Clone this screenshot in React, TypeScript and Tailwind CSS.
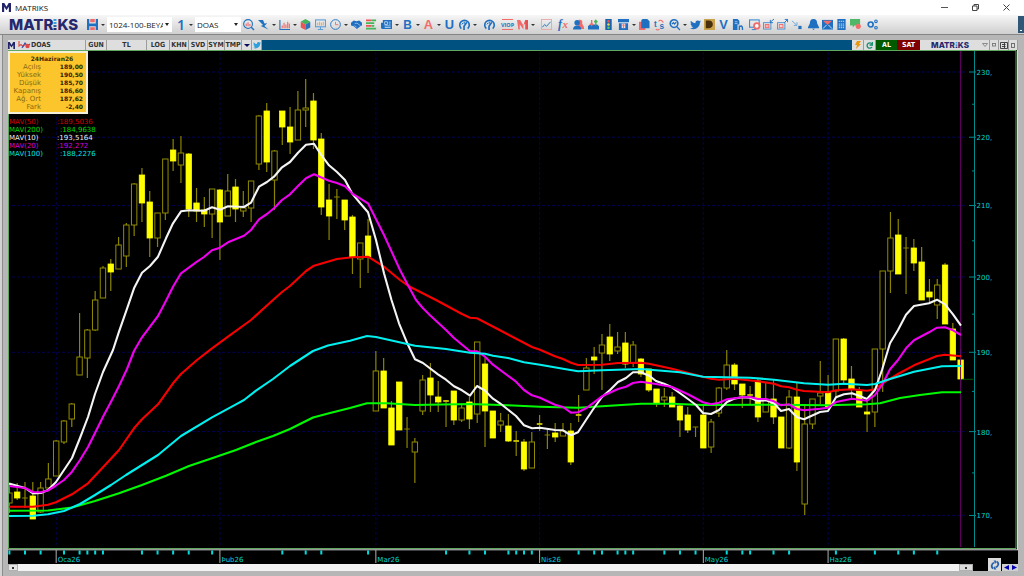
import type { ReactNode } from 'react';

const BLUE = '#1f70c1';
const RED = '#f26b6b';

// x of the first bar and distance between two bars
const X0 = 9.4;
const STEP = 7.797;
const barX = (i: number) => X0 + i * STEP;

// logarithmic price scale
const priceY = (price: number) => 72 + Math.log(230 / price) * 1467;

// [high, top, bottom, low, filled]
type Candle = [number, number, number, number, 0 | 1];

const candles: Candle[] = [
  [483, 493, 503, 513, 0], [483, 492, 498, 500, 1], [482, 498, 498, 508, 0], [482, 496, 519, 519, 1],
  [482, 488, 512, 513, 0], [463, 479, 488, 488, 0], [440, 441, 476, 476, 0], [420, 421, 442, 444, 0],
  [403, 404, 419, 427, 0], [313, 357, 375, 375, 0], [329, 330, 358, 378, 0], [291, 300, 330, 331, 0],
  [266, 268, 298, 298, 0], [259, 264, 272, 291, 1], [237, 245, 269, 269, 0], [223, 225, 256, 267, 0],
  [183, 184, 225, 236, 0], [168, 175, 203, 222, 1], [191, 202, 238, 257, 1], [213, 213, 238, 247, 0],
  [159, 159, 213, 220, 0], [139, 150, 161, 171, 1], [136, 153, 165, 183, 0], [153, 154, 209, 217, 1],
  [188, 203, 211, 222, 1], [197, 210, 214, 227, 1], [189, 189, 214, 238, 0], [189, 190, 222, 260, 1],
  [174, 191, 216, 216, 0], [179, 187, 209, 222, 1], [191, 208, 211, 217, 0], [181, 181, 208, 222, 0],
  [115, 116, 164, 170, 0], [103, 111, 162, 172, 1], [150, 151, 180, 210, 0], [111, 111, 127, 145, 1],
  [107, 127, 142, 154, 1], [91, 110, 140, 140, 0], [79, 108, 110, 127, 0], [93, 101, 140, 149, 1],
  [133, 139, 207, 215, 1], [184, 200, 216, 240, 1], [189, 197, 197, 219, 0], [200, 200, 220, 230, 1],
  [215, 217, 257, 274, 1], [243, 243, 259, 288, 0], [219, 236, 257, 273, 1], [351, 371, 411, 411, 0],
  [358, 371, 408, 408, 1], [401, 408, 445, 445, 1], [382, 382, 430, 430, 1], [417, 429, 429, 448, 0],
  [438, 442, 452, 483, 0], [375, 380, 411, 415, 0], [363, 378, 395, 412, 1], [381, 397, 402, 412, 1],
  [400, 401, 402, 427, 1], [391, 391, 420, 425, 1], [405, 408, 420, 422, 0], [397, 402, 419, 429, 1],
  [342, 342, 414, 423, 0], [358, 364, 411, 447, 1], [411, 411, 438, 438, 1], [413, 421, 425, 432, 0],
  [414, 426, 441, 442, 1], [431, 441, 442, 456, 1], [439, 442, 469, 471, 1], [432, 442, 468, 468, 0],
  [415, 424, 425, 431, 1], [430, 435, 435, 449, 0], [423, 433, 437, 442, 1], [423, 431, 436, 436, 0],
  [423, 431, 462, 465, 1], [395, 415, 416, 422, 1], [358, 368, 390, 390, 0], [347, 357, 360, 374, 1],
  [334, 345, 353, 390, 0], [324, 337, 354, 361, 1], [332, 347, 351, 354, 0], [332, 343, 364, 368, 1],
  [341, 345, 363, 367, 0], [358, 359, 374, 377, 1], [369, 369, 390, 392, 1], [389, 389, 403, 407, 1],
  [388, 397, 400, 407, 0], [392, 397, 407, 407, 1], [405, 406, 420, 437, 1], [407, 415, 430, 433, 1],
  [427, 427, 427, 437, 0], [405, 415, 448, 448, 1], [419, 422, 447, 453, 0], [387, 388, 413, 417, 0],
  [350, 365, 388, 390, 0], [363, 365, 384, 390, 1], [384, 384, 395, 408, 1], [386, 395, 396, 405, 1],
  [378, 381, 417, 422, 1], [383, 400, 412, 412, 0], [380, 399, 417, 424, 1], [417, 417, 448, 448, 1],
  [390, 397, 448, 449, 0], [383, 397, 462, 471, 1], [406, 424, 504, 515, 0], [399, 399, 424, 429, 0],
  [361, 393, 396, 404, 0], [375, 392, 407, 407, 1], [339, 339, 391, 397, 0], [338, 339, 380, 383, 1],
  [366, 379, 389, 400, 1], [387, 391, 407, 407, 1], [400, 412, 414, 432, 1], [349, 349, 412, 427, 0],
  [271, 271, 349, 392, 0], [212, 238, 271, 293, 0], [219, 235, 274, 274, 1], [237, 248, 248, 294, 0],
  [239, 248, 263, 271, 1], [247, 262, 300, 300, 1], [279, 292, 297, 302, 1], [279, 285, 305, 319, 0],
  [263, 265, 324, 324, 1], [323, 329, 360, 360, 1], [349, 360, 379, 387, 1],
];

const averages = [
  {
    color: '#f80000',
    points:
      '9,506.7 33,506.7 48,504.7 56,502.3 72,494.3 88,483.3 103,467.3 119,450 134,428.3 142,419.3 158,404.3 173,383.3 181,374 197,360 212,348.3 228,336.7 251,320 273,300 282,292 290,286 306,271 314,265.7 337,259 352,257.3 368,256.7 384,266.7 400,280 408,285.7 436,300 462,314 470,317.7 477,318.3 532,347 540,349.7 555,356.3 563,359 571,362.7 578,365 602,364.7 618,363 641,362.7 649,363.7 672,368.7 696,375 711,378.7 719,379.7 734,378.7 758,381.3 774,383.7 781,386.3 789,387.3 797,389.7 804,391 828,392.3 836,390.3 852,389.3 867,390.7 875,389.3 882,383.7 898,374 914,365.3 937,356 945,354.7 961,356.3',
  },
  {
    color: '#00f800',
    points:
      '9,510.7 48,510.5 72,507.5 95,501 119,493.3 142,485 166,475.7 189,466 212,458.3 236,450 256,442 273,436 290,429 313,417.5 330,413 350,408 367,403.3 387,403.3 415,405 470,404 508,405.3 540,406.7 578,407.7 602,406.3 641,403.7 672,403.7 703,405 774,404.7 828,405.3 867,404.3 880,403.3 900,398 920,395 942,392.3 961,392.3',
  },
  {
    color: '#f4f4f4',
    points:
      '9,483.5 25,488 33,493.5 41,493 48,490 56,482 72,458 80,438 88,417 95,394 103,372 113,350 119,331.7 126,311.7 134,288.3 142,272.7 150,266 158,256.7 166,238.3 173,223.3 181,211.3 189,210.3 204,210.7 212,207.3 220,209.7 228,206.3 244,207 251,202.7 259,186.7 267,182 274,176.7 282,167.3 290,162 298,152.7 306,144.7 314,143.7 321,154.7 329,165.3 337,172 345,180 352,193.3 360,203 368,212.3 376,240 384,273.3 391.5,300 399,323.3 407,342.7 415,359.3 423,363 438,374.3 446,379.7 454,386.3 462,390.3 470,395.7 477,386 485,390.7 493,398.7 500,403.3 516,416 524,425.3 532,428.3 540,427.7 555,430 563,430.3 571,435.3 578,432.3 586,420 594,408 602,397 610,390 618,382 626,378 633,372.3 641,372.3 649,375.7 656,381 664,383.7 672,387.3 688,399 696,405 703,413 711,414 719,410 727,402 734,398.7 742,397.3 750,397.7 758,401 766,400.3 774,403.3 781,411 789,409 797,417.3 804,419.3 820,412 828,411 836,397.3 844,394.3 852,393.3 859,395.7 867,399 875,390 882,370 890,343.3 898,330 906,314.7 914,306 929,303.3 937,299.7 945,304.3 953,314.3 961,325.7',
  },
  {
    color: '#f000f0',
    points:
      '9,486 25,488 33,492 41,492.3 48,490.5 56,485.5 64,480 72,471.7 80,460 88,447 95,433 103,416.7 111,401.7 119,386 127,369 134,351 142,337.3 158,316 166,300.7 173,286.7 181,273.3 197,261.7 204,257 212,250.3 220,247.7 228,242.3 244,235.7 251,230 259,219.3 267,214 274,208.3 282,200 290,194.3 298,186 306,178.3 314,174.3 329,180.7 337,183 345,186.3 352,193.3 368,203.3 384,235 400,270 408,285.3 416,300 423,308.3 430,315.3 446,330 454,338 470,351.3 477,351.3 485,356.7 493,364.7 516,381.7 524,390 532,395.3 540,397.7 555,404.7 563,407 571,412.7 578,412.3 586,408.3 602,396.3 618,389 626,386.7 633,383 641,381.7 656,384 672,387 688,394.3 703,402.3 711,404.3 719,402.7 727,399.3 742,397.3 750,397 758,399 766,399 774,401.3 781,405.3 789,404.3 797,409 804,410.3 820,408.7 828,407.7 836,402 852,398.7 867,400.7 875,395 882,385 890,369.3 898,360 906,348.3 914,340.3 929,332.3 937,327.7 945,327.3 953,330.3 961,335',
  },
  {
    color: '#00f0f0',
    points:
      '9,516 33,515.7 48,514.3 64,511 80,504 95,495 111,485 126,475 142,465 158,455 181,436 212,417.3 236,404.3 244,400 256,390.7 273,379 290,366 313,351 328,345.5 350,340.7 367,336 376,337 415,345.7 446,349 470,352.7 485,353.7 493,355.7 508,358 524,362.3 540,364.7 563,368.7 578,371.3 602,370.3 641,369 680,372.3 703,376.7 750,377.7 774,379.7 804,383.3 828,384.7 844,383.7 867,385 875,384 890,379 914,371.7 942,366.3 961,366',
  },
];

const months = [
  { label: 'Oca26', bar: 6 },
  { label: 'Þub26', bar: 27 },
  { label: 'Mar26', bar: 47 },
  { label: 'Nis26', bar: 68 },
  { label: 'May26', bar: 89 },
  { label: 'Haz26', bar: 105 },
];

const dayMarks = [
  0, 2, 4, 7, 9, 10, 11, 12, 17, 19, 21, 23, 26, 35, 38, 40, 46, 56, 59, 61, 64, 65, 66, 67, 73, 75, 76, 78, 79, 80,
  84, 86, 88, 92, 94, 95, 98, 100, 106, 111, 114, 116, 119,
];

const majorPrices = [230, 220, 210, 200, 190, 180, 170];
const minorPrices = [225, 215, 205, 195, 185, 175];

const dayInfo = [
  ['Açılış', '189,00'],
  ['Yüksek', '190,50'],
  ['Düşük', '185,70'],
  ['Kapanış', '186,60'],
  ['Ağ. Ort', '187,62'],
  ['Fark', '-2,40'],
];

const legend = [
  { name: 'MAV(50)', value: ':189,5036', className: 'text-[#d00000]', nameWidth: 'w-[48px]' },
  { name: 'MAV(200)', value: ':184,9638', className: 'text-[#00d800]', nameWidth: 'w-[51px]' },
  { name: 'MAV(10)', value: ':193,5164', className: 'text-[#f0f0f0]', nameWidth: 'w-[48px]' },
  { name: 'MAV(20)', value: ':192,272', className: 'text-[#d800d8]', nameWidth: 'w-[48px]' },
  { name: 'MAV(100)', value: ':188,2276', className: 'text-[#00e0e0]', nameWidth: 'w-[51px]' },
];

function MIcon({ className }: { className: string }) {
  return (
    <svg className={className} viewBox="0 0 10 10" fill="#23256b">
      <path d="M0 0h2.6L5 4.2 7.4 0H10v10H7.6V4.2L5 8 2.4 4.2V10H0z" />
    </svg>
  );
}

function Wordmark({ large }: { large?: boolean }) {
  return (
    <span
      className={`flex items-center font-['Inter',sans-serif] font-extrabold text-[#26286e] ${
        large ? 'text-[15px] leading-[16px]' : 'text-[8px] leading-[9px]'
      }`}
    >
      MATR
      <svg className={large ? 'h-[11px] w-[4px]' : 'h-[6px] w-[3px]'} viewBox="0 0 4 11" role="img" aria-label="i">
        <rect x=".5" y="0" width="3" height="2" fill="#3aa0dc" />
        <rect x=".5" y="3" width="3" height="2" fill="#3aa0dc" />
        <rect x=".5" y="6" width="3" height="2" fill="#2b5fa8" />
        <rect x=".5" y="9" width="3" height="2" fill="#26286e" />
      </svg>
      KS
    </span>
  );
}

function Tool({ label, narrow, children }: { label: string; narrow?: boolean; children: ReactNode }) {
  return (
    <button
      type="button"
      aria-label={label}
      className={`flex h-[16px] shrink-0 items-center justify-center ${narrow ? 'w-[14px]' : 'w-[15px]'}`}
    >
      <svg className="h-[11px] w-[11px] overflow-visible" viewBox="0 0 12 12" fill="none">
        {children}
      </svg>
    </button>
  );
}

function Caret({ label }: { label: string }) {
  return (
    <button type="button" aria-label={label} className="flex h-[16px] w-[6px] shrink-0 items-center justify-center">
      <svg className="h-[2px] w-[4px]" viewBox="0 0 4 2" fill="#333">
        <path d="M0 0h4L2 2z" />
      </svg>
    </button>
  );
}

function Combo({ label, value, className }: { label: string; value: string; className: string }) {
  return (
    <span className={`relative h-[15px] shrink-0 bg-white ${className}`}>
      <select
        aria-label={label}
        className="block h-[15px] w-full appearance-none overflow-hidden pr-[9px] pl-[2px] font-['Open_Sans',sans-serif] text-[8px] leading-[15px] text-clip whitespace-nowrap text-[#222]"
      >
        <option>{value}</option>
      </select>
      <svg className="pointer-events-none absolute top-[6px] right-[3px] h-[3px] w-[4px]" viewBox="0 0 4 3" fill="#222">
        <path d="M0 0h4L2 3z" />
      </svg>
    </span>
  );
}

const bird =
  'M12 2.6c-.4.2-.9.3-1.4.4.5-.3.9-.8 1.1-1.3-.5.3-1 .5-1.6.6C9.700 1.800 9 1.500 8.300 1.500c-1.500 0-2.700 1.400-2.300 3C4 4.400 2.200 3.400 1 1.900c-.7 1.100-.3 2.600.7 3.300-.4 0-.8-.1-1.100-.3 0 1.200.8 2.200 2 2.500-.4.1-.7.1-1.100 0 .3 1 1.200 1.700 2.300 1.700C2.800 9.900 1.400 10.300 0 10.100c4.900 2.900 10.800-.4 10.800-6.200.5-.3.9-.8 1.200-1.300z';

function Gauge() {
  return (
    <>
      <path d="M2.500 10.500A5.200 5.200 0 1 1 9.500 10.500" stroke={BLUE} strokeWidth="1.800" />
      <path d="M3 6l1.500-2M5.500 5.500l.5-2.500" stroke={BLUE} strokeWidth="1" />
      <path d="M8.500 3.500L5.500 8v4" stroke={BLUE} strokeWidth="1.800" />
    </>
  );
}

function Toolbar() {
  return (
    <div className="flex h-[20px] items-center border-b border-[#858585] bg-gradient-to-b from-[#f7f7f7] to-[#cfcfcf] pl-[9px]">
      <div className="w-[76px] shrink-0">
        <Wordmark large />
      </div>
      <Tool label="Kaydet">
        <path d="M0 0h2.500v5h7V0H12v12H9.500V8h-7v4H0z" fill={BLUE} />
        <path d="M3.500 0h5v3.500h-5zM3.500 9h5v3h-5z" fill={RED} />
      </Tool>
      <Caret label="Kaydet seçenekleri" />
      <Combo label="Şablon" value="1024-100-BEYAZ" className="ml-[1px] w-[65px]" />
      <button
        type="button"
        className="ml-[2px] h-[16px] w-[14px] shrink-0 text-center font-['Noto_Sans',sans-serif] text-[14px] leading-[16px] font-semibold text-[#1f70c1]"
      >
        1
      </button>
      <Caret label="Periyot" />
      <Combo label="Sembol" value="DOAS" className="ml-[1px] w-[46px]" />

      <Tool label="Ara">
        <circle cx="5.500" cy="5.500" r="4.800" stroke={BLUE} strokeWidth="1.200" />
        <path d="M9 9l3 3" stroke={BLUE} strokeWidth="1.500" />
        <path d="M3.500 8V5M5.500 8V3.500M7.500 8V5.500" stroke={RED} strokeWidth="1.200" />
      </Tool>
      <Tool label="Hızlı emir">
        <path d="M0 1h5.500l1.500 4 3-.5L7 7.500l4.500 4L3 7.600l2.500-1z" fill={BLUE} />
      </Tool>
      <Caret label="Hızlı emir seçenekleri" />
      <Tool label="Grafik">
        <path d="M1 1v10.500h11" stroke={BLUE} strokeWidth="1.200" />
        <path d="M3.500 10V7M5.500 10V4M7.500 10V6M9.500 10V3M11.300 10V5" stroke={RED} strokeWidth="1.200" />
      </Tool>
      <Caret label="Grafik seçenekleri" />
      <Tool label="Pasta">
        <path d="M6 6L.8 3 6 0l5.200 3z" fill="#46b45a" />
        <path d="M6 6L.8 3v6.200L6 12z" fill="#e85656" />
        <path d="M6 6l5.200-3v6.200L6 12z" fill="#2a72bd" />
      </Tool>
      <Tool label="Ekran">
        <rect x=".6" y="1" width="10.800" height="7.500" stroke="#5b9ed8" strokeWidth="1.200" />
        <path d="M3 7V4M5 7V3M7 7V4M9 7V3" stroke="#f0a040" strokeWidth="1" />
        <path d="M6 8.500V11M3 11.500h6" stroke="#5b9ed8" strokeWidth="1.200" />
      </Tool>
      <Tool label="Saat">
        <circle cx="6" cy="6" r="5.300" stroke={BLUE} strokeWidth="1" />
        <path d="M6 3v3.200h3" stroke={RED} strokeWidth="1" />
      </Tool>
      <Caret label="Saat seçenekleri" />
      <Tool label="Emirler">
        <path d="M0 4l3-2.500 3 1 3-1L12 4v3l-1.500.5L6.500 11 3 8 0 7z" fill={BLUE} />
        <path d="M4 5l2.500-.5 4 3M4 7l2 2" stroke="#c7ddf2" strokeWidth=".7" />
      </Tool>
      <Tool label="Derinlik">
        <path d="M0 1.500h6M0 7.500h6" stroke="#e85656" strokeWidth="2" />
        <path d="M6 1.500h5M0 4.500h9M6 7.500h3M0 10.500h11" stroke="#46b45a" strokeWidth="2" />
      </Tool>
      <Tool label="Haberler">
        <path d="M2 1h10v10H1.500L0 10V4h2z" fill={BLUE} />
        <path d="M4 3h3v3H4zM8.500 3.500h2M8.500 5.500h2M4 7.500h6.500M4 9.300h6.500" stroke="#dbe9f6" strokeWidth=".8" />
      </Tool>
      <Caret label="Haber seçenekleri" />
      <Tool label="Bono">
        <text x="6" y="11" textAnchor="middle" fontSize="13" fontWeight="700" fill={BLUE} fontFamily="Liberation Sans">
          B
        </text>
      </Tool>
      <Caret label="Bono seçenekleri" />
      <Tool label="Analiz">
        <text x="6" y="11" textAnchor="middle" fontSize="14" fontWeight="700" fill={RED} fontFamily="Liberation Sans">
          A
        </text>
      </Tool>
      <Caret label="Analiz seçenekleri" />
      <Tool label="Uyarı">
        <text x="6" y="11" textAnchor="middle" fontSize="14" fontWeight="700" fill={BLUE} fontFamily="Liberation Sans">
          U
        </text>
      </Tool>
      <Tool label="Gösterge">
        <Gauge />
      </Tool>
      <Caret label="Gösterge seçenekleri" />

      <span className="w-[4px]" />
      <Tool label="Hisse göstergesi">
        <Gauge />
      </Tool>
      <span className="w-[3px]" />
      <Tool label="VIOP">
        <path d="M0 .5h12M0 11.500h12" stroke={RED} strokeWidth="1.200" />
        <text x="6" y="8.500" textAnchor="middle" fontSize="6" fontWeight="700" fill={BLUE} fontFamily="Liberation Sans Narrow, Open Sans">
          VIOP
        </text>
      </Tool>
      <Tool label="Matriks">
        <path d="M0 1h3.500L7 7v4.500L3 6v5.500H1.500z" fill={RED} />
        <path d="M7 7l2-6h3v10.500H9V5z" fill="#e85050" />
      </Tool>
      <Caret label="Matriks seçenekleri" />

      <span className="w-[3px]" />
      <Tool label="Çizgi grafik">
        <rect x=".5" y=".5" width="11" height="11" stroke="#e7a8a8" />
        <path d="M1.500 9l2.500-3 2 2 4.500-5" stroke={BLUE} strokeWidth="1" />
      </Tool>
      <span className="w-[2px]" />
      <Tool label="Fonksiyon">
        <text x="0" y="10" fontSize="13" fontStyle="italic" fontWeight="700" fill={BLUE} fontFamily="Liberation Serif">
          f
        </text>
        <text x="5" y="10" fontSize="12" fontStyle="italic" fontWeight="700" fill={RED} fontFamily="Liberation Serif">
          x
        </text>
      </Tool>
      <Tool label="Takas">
        <path d="M6 1c3-1 5 1 4 4l2 4v2H5z" fill={RED} />
        <circle cx="4.500" cy="4" r="3" fill={BLUE} />
        <path d="M0 11.500c0-3 2-4.500 4.500-4.500S9 8.500 9 11.500z" fill={BLUE} />
      </Tool>
      <Tool label="Yükle">
        <path d="M0 11.500V8l2-2h8l2 2v3.500z" fill={BLUE} />
        <path d="M4 1v6M2.500 5L4 7l1.500-2" stroke={RED} strokeWidth="1.500" />
        <path d="M8.500 7V1.500M6.800 3.500l1.700-2 1.700 2" stroke="#46b45a" strokeWidth="1.500" />
      </Tool>
      <Tool label="Sinyal">
        <rect x="2.500" y="0" width="7" height="12" fill="#1b62ae" />
        <circle cx="6" cy="2.500" r="1.400" fill="#f05050" />
        <circle cx="6" cy="6" r="1.400" fill="#f4d640" />
        <circle cx="6" cy="9.500" r="1.400" fill="#50d060" />
      </Tool>
      <Tool label="Arşiv">
        <path d="M0 0h12v3.500H0zM1 4.500h10V12H1z" fill={BLUE} />
        <path d="M4 5h4v5H4z" fill="#f7d8d8" />
        <path d="M6 10V6M4.500 7.300L6 5.800l1.500 1.500" stroke={RED} strokeWidth="1" />
      </Tool>
      <Caret label="Arşiv seçenekleri" />
      <Tool label="Kopyala">
        <path d="M0 3h7v9H0z" fill={RED} />
        <path d="M4 0h5l2.500 2.500V10H2.500V1z" fill={BLUE} />
      </Tool>
      <Tool label="Döviz">
        <text x="0" y="9" fontSize="9" fontWeight="700" fill={BLUE} fontFamily="Liberation Sans">
          t
        </text>
        <text x="6" y="11" fontSize="9" fontWeight="700" fill={BLUE} fontFamily="Liberation Sans">
          s
        </text>
        <path d="M5 2.500c2-2 4.500-1 5 1.500M2 11c1.500 1.500 3 1 4 0" stroke={RED} strokeWidth="1.200" />
      </Tool>
      <Tool label="Tarama">
        <circle cx="5.500" cy="5" r="4.200" stroke={BLUE} strokeWidth="1.700" />
        <path d="M3 5.500l2-1.500 1 1.500 2-2M8.500 8.500L12 12" stroke={BLUE} strokeWidth="1.300" />
      </Tool>
      <Caret label="Tarama seçenekleri" />

      <Tool narrow label="Twitter">
        <path d={bird} fill={BLUE} />
      </Tool>
      <Tool narrow label="Veri">
        <rect x="0" y="0" width="12" height="12" fill="#c9a24c" />
        <path d="M2 1.500h3.500c5 0 6 7.500 0 8.500H2z" fill="#4a2f0c" />
      </Tool>
      <Tool narrow label="Varant">
        <text x="6" y="11" textAnchor="middle" fontSize="14" fontWeight="700" fill={BLUE} fontFamily="Liberation Sans">
          V
        </text>
      </Tool>
      <Tool narrow label="Rapor">
        <path d="M1 0h5l2 2v4H6v6H1z" fill={BLUE} />
        <path d="M3 3h3M3 5h3" stroke="#cfe2f4" strokeWidth=".8" />
        <path d="M8 12V7M8 8.500c3-2 3.500 0 3.500 3.500" stroke={BLUE} strokeWidth="1.500" />
      </Tool>
      <span className="w-[3px]" />
      <Tool narrow label="Ekran kaydı">
        <rect x=".6" y="1" width="10.500" height="8" stroke="#3d8bd1" strokeWidth="1.200" />
        <path d="M3 11.500h5" stroke="#3d8bd1" strokeWidth="1.200" />
        <circle cx="8.500" cy="7.500" r="3" fill="#fff" stroke={RED} strokeWidth="2" />
      </Tool>
      <Tool narrow label="Küçült">
        <rect x=".6" y="4" width="8" height="7" stroke="#4a90d0" strokeWidth="1" />
        <rect x="2.500" y="6" width="4" height="3.500" fill="#f5b3b3" stroke={RED} />
        <path d="M12 0L8 3.500M8 1v3h3" stroke={BLUE} strokeWidth="1" />
      </Tool>
      <Tool narrow label="Büyüt">
        <rect x=".6" y="4" width="8" height="7" stroke="#4a90d0" strokeWidth="1" />
        <rect x="2.500" y="6" width="4" height="3.500" fill="#f8d0d0" stroke={RED} />
        <path d="M8 4l3.500-3.500M8.500.5h3v3" stroke={BLUE} strokeWidth="1" />
      </Tool>
      <Tool narrow label="Taşı">
        <path d="M1 2l5 4.500M6.500 3.500v3.500H3" stroke="#6aa5da" strokeWidth="1" />
        <path d="M8 7.500h3.500V11H8z" fill={BLUE} />
      </Tool>
      <span className="w-[3px]" />
      <Tool narrow label="Alarm">
        <path d="M6 0c3 0 4 2 4 5l2 4v1H0V9l2-4c0-3 1-5 4-5zM4.500 10.500h3L6 12z" fill={BLUE} />
      </Tool>
      <Tool narrow label="Mesaj">
        <rect x="0" y="1" width="12" height="10.500" fill={BLUE} />
        <path d="M1 2h10L6 6.500z" fill={RED} />
        <path d="M1 10.500L5 6.500M11 10.500L7 6.500" stroke="#e7f0f9" strokeWidth=".9" />
      </Tool>
      <Tool narrow label="Hesap makinesi">
        <rect x="1.500" y="0" width="9" height="12" fill={BLUE} />
        <path d="M3 2.500h6M3 5.500h6M3 7.500h6M3 9.500h6" stroke="#cfe2f4" strokeWidth="1" strokeDasharray="1.500 .7" />
      </Tool>
      <Tool narrow label="Sohbet">
        <path d="M0 0h11v7H5l-2 2.500V7H0z" fill="#4fb866" />
        <circle cx="9" cy="8" r="2.800" fill={RED} />
      </Tool>
      <span className="w-[3px]" />
      <Tool narrow label="Ayarlar">
        <circle cx="4" cy="6" r="2.700" stroke={BLUE} strokeWidth="1.800" />
        <circle cx="9.800" cy="2.500" r="1.400" stroke={BLUE} strokeWidth="1.200" />
        <circle cx="9.800" cy="9.500" r="1.400" stroke={BLUE} strokeWidth="1.200" />
      </Tool>
      <span className="ml-auto flex h-[17px] w-[6px] items-end justify-center bg-[#2f5878] pb-[2px]">
        <span className="h-px w-[2px] bg-white" />
      </span>
    </div>
  );
}

function StripButton({ className, children }: { className: string; children: ReactNode }) {
  return (
    <button
      type="button"
      className={`flex h-full shrink-0 items-center justify-center border-r border-[#9c9c9c] bg-[#dedede] ${className}`}
    >
      {children}
    </button>
  );
}

function ChartStrip() {
  return (
    <div className="flex h-[10px] items-stretch bg-[#00517f] font-['DejaVu_Sans_Condensed','DejaVu_Sans',sans-serif] text-[7px] leading-[10px] font-bold text-[#333]">
      <span className="flex w-[9px] shrink-0 items-center bg-[#dedede]">
        <MIcon className="h-[7px] w-[7px]" />
      </span>
      <span className="flex w-[14px] shrink-0 items-center justify-center bg-[#dedede]">
        <svg className="h-[8px] w-[13px]" viewBox="0 0 13 8" fill="none">
          <path d="M1 0v5l2-1.500 2 2 3-3.500" stroke="#e05050" strokeWidth="1.200" />
          <path d="M4 7l3-5 2 3 3-2" stroke="#3a55b0" strokeWidth="1.200" />
          <circle cx="9.500" cy="5" r="2.200" fill="#e04848" />
        </svg>
      </span>
      <span className="flex w-[55px] shrink-0 items-center border-r border-[#9c9c9c] bg-[#dedede]">DOAS</span>
      <StripButton className="w-[21px]">GUN</StripButton>
      <StripButton className="w-[40px]">TL</StripButton>
      <StripButton className="w-[23px]">LOG</StripButton>
      <StripButton className="w-[19px]">KHN</StripButton>
      <StripButton className="w-[19px]">SVD</StripButton>
      <StripButton className="w-[17px]">SYM</StripButton>
      <StripButton className="w-[17px]">TMP</StripButton>
      <StripButton className="w-[10px]">
        <svg className="h-[3px] w-[6px]" viewBox="0 0 6 3" fill="#0a0a5a" role="img" aria-label="Menü">
          <path d="M0 0h6L3 3z" />
        </svg>
      </StripButton>
      <StripButton className="w-[10px]">
        <svg className="h-[8px] w-[8px]" viewBox="0 0 12 12" fill="#2f9fdc" role="img" aria-label="Paylaş">
          <path d={bird} />
        </svg>
      </StripButton>
      <span className="flex-1" />
      <StripButton className="w-[12px]">
        <svg className="h-[8px] w-[6px]" viewBox="0 0 6 8" fill="#e8960c" role="img" aria-label="Hızlı">
          <path d="M2 0h4L4 3h2L1 8l1-4H0z" />
        </svg>
      </StripButton>
      <StripButton className="w-[12px]">
        <svg className="h-[7px] w-[7px]" viewBox="0 0 7 7" fill="none" role="img" aria-label="Yenile">
          <path d="M6 2A2.700 2.700 0 1 0 6 5M6.500 0v3h-3" stroke="#159070" strokeWidth="1.300" />
        </svg>
      </StripButton>
      <button type="button" className="w-[21px] shrink-0 bg-[#005a00] text-white">
        AL
      </button>
      <button type="button" className="w-[23px] shrink-0 bg-[#800000] text-white">
        SAT
      </button>
      <span className="flex w-[60px] shrink-0 items-center justify-center bg-[#dedede]">
        <Wordmark />
      </span>
      <StripButton className="w-[10px]">
        <svg className="h-[4px] w-[6px]" viewBox="0 0 6 4" fill="none" role="img" aria-label="Aşağı">
          <path d="M.5.5h5L3 3.500z" stroke="#777" strokeWidth=".8" />
        </svg>
      </StripButton>
      <StripButton className="w-[9px]">
        <svg className="h-[4px] w-[4px]" viewBox="0 0 4 4" fill="none" role="img" aria-label="Küçült">
          <rect x=".5" y=".5" width="3" height="2.500" stroke="#777" strokeWidth=".9" />
        </svg>
      </StripButton>
      <StripButton className="w-[10px]">
        <svg className="h-[7px] w-[8px]" viewBox="0 0 8 7" fill="none" role="img" aria-label="Pencere">
          <path d="M.5.500h4v6h-4zM4.500.500h3v6h-3M2 2.500h3.500M2 4.500h3.500" stroke="#333" strokeWidth=".9" />
        </svg>
      </StripButton>
      <StripButton className="w-[9px]">
        <svg className="h-[5px] w-[4px]" viewBox="0 0 4 5" fill="none" role="img" aria-label="Kapat">
          <rect x=".5" y=".5" width="3" height="4" stroke="#666" strokeWidth=".9" />
        </svg>
      </StripButton>
    </div>
  );
}

function CandleBar({ candle, index }: { candle: Candle; index: number }) {
  const [high, top, bottom, low, filled] = candle;
  const x = barX(index);
  const wick = index === candles.length - 1 ? '#0a6a0a' : '#8a8400';
  return (
    <g>
      <path d={`M${x} ${high}V${top}M${x} ${bottom}V${low}`} stroke={wick} strokeWidth="1.2" />
      {bottom - top < 2 ? (
        <path d={`M${x - 2.800} ${top}h5.600`} stroke={filled ? '#e6e000' : '#8a8400'} strokeWidth={filled ? 1.600 : 1} />
      ) : (
        <rect
          x={x - 2.700}
          y={top}
          width="5.400"
          height={bottom - top}
          fill={filled ? '#ffff00' : '#000000'}
          stroke={filled ? '#ffff00' : '#918b00'}
          strokeWidth={filled ? 0.800 : 1}
        />
      )}
    </g>
  );
}

function PriceChart() {
  return (
    <svg
      className="block h-auto w-full font-['DejaVu_Sans',sans-serif]"
      viewBox="8 50 1010 514"
      role="img"
      aria-label="DOAS"
    >
      <rect x="8" y="50" width="1010" height="514" fill="#000" />

      <g stroke="#000058" strokeWidth="1" strokeDasharray="3 2">
        {majorPrices.map((p) => (
          <path key={p} d={`M12 ${priceY(p)}H968`} />
        ))}
        {months.map((m) => (
          <path key={m.label} d={`M${barX(m.bar)} 52V546`} />
        ))}
      </g>

      {candles.map((c, i) => (
        <CandleBar key={i} candle={c} index={i} />
      ))}
      <path d="M962 379.300h11" stroke="#005a00" />
      <path d="M960.600 51V547" stroke="#640064" />

      {averages.map((a) => (
        <polyline key={a.color} points={a.points} fill="none" stroke={a.color} strokeWidth="2.100" strokeLinejoin="round" />
      ))}

      {/* price axis */}
      <g stroke="#008c8c">
        <path d="M974.500 51V547" />
        {majorPrices.map((p) => (
          <path key={p} d={`M969 ${priceY(p)}h7`} />
        ))}
        {minorPrices.map((p) => (
          <path key={p} d={`M972 ${priceY(p)}h3`} />
        ))}
      </g>
      {majorPrices.map((p) => (
        <text key={p} x="976.500" y={priceY(p) + 3} fontSize="7" fill="#00d4d4">
          {p},
        </text>
      ))}

      <path d="M8.500 50V548.500H1016V50.500H8" fill="none" stroke="#5fa85f" />
      <path d="M8 549.800H1018M1017.500 50V550" stroke="#d8d8d8" strokeWidth="1" />

      {/* time axis */}
      {dayMarks.map((d) => (
        <rect key={d} x={barX(d) - 1} y="550.500" width="2" height="4" fill="#00dcdc" />
      ))}
      {months.map((m) => (
        <g key={m.label}>
          <path d={`M${barX(m.bar)} 550V563`} stroke="#b0b0b0" />
          <text x={barX(m.bar) + 1.500} y="561.500" fontSize="7" fill="#00d4d4">
            {m.label}
          </text>
        </g>
      ))}
    </svg>
  );
}

function DayInfo() {
  return (
    <div className="absolute top-px left-0 w-[80px] border-2 border-[#f4efd8] bg-[#fdc52c] px-[3px] pt-[2px] pb-px">
      <p className="pl-[8px] text-center text-[6px] leading-[8px] font-bold text-[#3a2c00]">24Haziran26</p>
      <dl>
        {dayInfo.map(([name, value]) => (
          <div key={name} className="flex h-[8px] items-center">
            <dt className="w-[28px] text-right text-[7px] leading-[8px] whitespace-nowrap text-[#8a6a10]">{name}</dt>
            <dd className="flex-1 text-right text-[6px] leading-[8px] font-bold text-[#2e2300]">{value}</dd>
          </div>
        ))}
      </dl>
    </div>
  );
}

export default function App() {
  return (
    <div className="flex min-h-screen flex-col bg-[#b6b6b6] font-['DejaVu_Sans',sans-serif]">
      <header className="flex h-[15px] items-center bg-white pl-[2px]">
        <MIcon className="h-[9px] w-[9px]" />
        <span className="ml-[4px] font-['Open_Sans',sans-serif] text-[8px] leading-[12px] text-[#111]">MATRIKS</span>
        <div className="ml-auto flex items-center gap-[19px] pr-[12px]">
          <button type="button" aria-label="Simge durumuna küçült" className="flex h-[12px] w-[12px] items-center justify-center">
            <span className="h-px w-[7px] bg-[#555]" />
          </button>
          <button type="button" aria-label="Önceki boyut" className="flex h-[12px] w-[12px] items-center justify-center">
            <svg className="h-[7px] w-[7px]" viewBox="0 0 7 7" fill="none" stroke="#444">
              <path d="M.5 2h4.500v4.500H.5zM2 2V.5h4.500V5H5" />
            </svg>
          </button>
          <button type="button" aria-label="Pencereyi kapat" className="flex h-[12px] w-[12px] items-center justify-center">
            <svg className="h-[7px] w-[7px]" viewBox="0 0 7 7" fill="none" stroke="#444">
              <path d="M.5.5l6 6M6.500.5l-6 6" />
            </svg>
          </button>
        </div>
      </header>
      <Toolbar />

      <div className="flex flex-1 border-l-2 border-[#d2d2d2]">
        <main className="flex-1 border-l border-[#8c8c8c] pt-[5px] pr-[6px] pl-[5px]">
          <ChartStrip />
          <div className="relative">
            <PriceChart />
            <DayInfo />
            <ul className="absolute top-[68px] left-px text-[7px] leading-[8px]">
              {legend.map((l) => (
                <li key={l.name} className={`flex ${l.className}`}>
                  <span className={l.nameWidth}>{l.name}</span>
                  <span>{l.value}</span>
                </li>
              ))}
            </ul>
          </div>
          <div className="flex h-[7px] bg-black">
            <div className="flex flex-1 justify-between bg-[#f3f3f3]">
              <button type="button" aria-label="Sola kaydır" className="flex w-[10px] items-center justify-center border border-[#b0b0b0] bg-[#e4e4e4]">
                <span className="h-[2px] w-[2px] bg-[#333]" />
              </button>
              <button type="button" aria-label="Sağa kaydır" className="flex w-[14px] items-center justify-center border border-[#b0b0b0] bg-[#dcdcdc]">
                <span className="h-[2px] w-[2px] bg-[#333]" />
              </button>
            </div>
            <div className="flex w-[45px] items-end justify-end">
              <button type="button" aria-label="Yenile" className="relative flex h-[13px] w-[13px] items-center justify-center bg-[#dcdcdc]">
                <svg className="h-[10px] w-[10px]" viewBox="0 0 10 10" fill="none">
                  <path d="M3.500 8.500C.5 7 1.500 3.500 4.500 2.500M6.500 1.500C9.500 3 8.500 6.500 5.500 7.500" stroke="#2a62a8" strokeWidth="1.800" />
                  <path d="M3.500.500h2.500v3.500zM6.500 9.500H4V6z" fill="#2a62a8" />
                </svg>
              </button>
              <button type="button" aria-label="Geri" className="ml-px flex h-[8px] w-[8px] items-center justify-center bg-[#d0d0d0]">
                <svg className="h-[5px] w-[5px]" viewBox="0 0 5 5" fill="#0000b0">
                  <path d="M5 0v5L0 2.500z" />
                </svg>
              </button>
              <button type="button" aria-label="İleri" className="flex h-[8px] w-[8px] items-center justify-center bg-[#d0d0d0]">
                <svg className="h-[5px] w-[5px]" viewBox="0 0 5 5" fill="#0000b0">
                  <path d="M0 0v5l5-2.500z" />
                </svg>
              </button>
            </div>
          </div>
        </main>
      </div>
    </div>
  );
}
